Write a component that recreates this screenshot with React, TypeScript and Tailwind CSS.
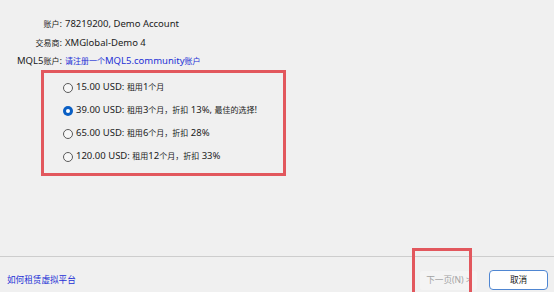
import React from "react";

const font = "font-['Segoe_UI','Noto_Sans','Noto_Sans_CJK_SC',sans-serif]";

// CJK glyphs in the dialog render a little smaller than the Latin text
function T({ s }: { s: string }) {
  const parts = s.split(/([\u3000-\u303f\u4e00-\u9fff\uff00-\uffef]+)/);
  return (
    <>
      {parts.map((part, i) =>
        i % 2 === 1 ? (
          <span key={i} className="text-[8px]">
            {part}
          </span>
        ) : (
          part
        )
      )}
    </>
  );
}

function Radio({ checked }: { checked?: boolean }) {
  if (checked) {
    return (
      <span className="flex h-[10px] w-[10px] shrink-0 items-center justify-center rounded-full bg-[#0a5fc4]">
        <span className="h-[4px] w-[4px] rounded-full bg-white" />
      </span>
    );
  }
  return <span className="h-[10px] w-[10px] shrink-0 rounded-full border border-[#5a5a5a] bg-[#f7f7f7]" />;
}

const plans = [
  { price: "15.00 USD:", text: "租用1个月" },
  { price: "39.00 USD:", text: "租用3个月，折扣 13%, 最佳的选择!", checked: true },
  { price: "65.00 USD:", text: "租用6个月，折扣 28%" },
  { price: "120.00 USD:", text: "租用12个月，折扣 33%" },
];

export default function App() {
  return (
    <div className={`relative flex h-[292px] w-[554px] flex-col overflow-hidden bg-[#f0f0f0] text-[9.5px] text-[#1b1b1b] ${font}`}>
      <div className="flex h-[256px] flex-col pt-[15px]">
        <div className="flex h-[19px] items-center whitespace-nowrap">
          <span className="w-[62px] text-right">
            <T s="账户:" />
          </span>
          <span className="ml-[3px]">78219200, Demo Account</span>
        </div>
        <div className="flex h-[19px] items-center whitespace-nowrap">
          <span className="w-[62px] text-right">
            <T s="交易商:" />
          </span>
          <span className="ml-[3px]">XMGlobal-Demo 4</span>
        </div>
        <div className="flex h-[17px] items-center whitespace-nowrap">
          <span className="w-[62px] text-right">
            <T s="MQL5账户:" />
          </span>
          <span className="ml-[3px] text-[#2431d6]">
            <T s="请注册一个MQL5.community账户" />
          </span>
        </div>
        <div className="ml-[41px] flex h-[106px] w-[245px] flex-col border-[3px] border-[#e2575d] pl-[19px] pt-[3px]">
          {plans.map((p) => (
            <div key={p.price} className="flex h-[23px] items-center gap-[3px] whitespace-nowrap">
              <Radio checked={p.checked} />
              <span>
                <T s={`${p.price} ${p.text}`} />
              </span>
            </div>
          ))}
        </div>
      </div>
      <div className="h-px bg-[#cdcdcd]" />
      <div className="flex flex-1 items-center pl-[7px] pr-[6px] pt-[11px]">
        <span className="text-[8.6px] text-[#2431d6]">如何租赁虚拟平台</span>
        <div className="ml-auto flex items-center gap-[12px]">
          <button className="flex h-[19px] w-[57px] items-center justify-center rounded-[3px] bg-[#f4f4f4] text-[8.6px] text-[#a3a3a3]">
            下一页(N) &gt;
          </button>
          <button className="flex h-[20px] w-[59px] items-center justify-center rounded-[4px] border border-[#4f86d2] bg-white text-[8.6px] text-[#1b1b1b]">
            取消
          </button>
        </div>
      </div>
      <div className="absolute left-[412px] top-[248px] h-[60px] w-[60px] border-[3px] border-[#e2575d]" />
    </div>
  );
}
